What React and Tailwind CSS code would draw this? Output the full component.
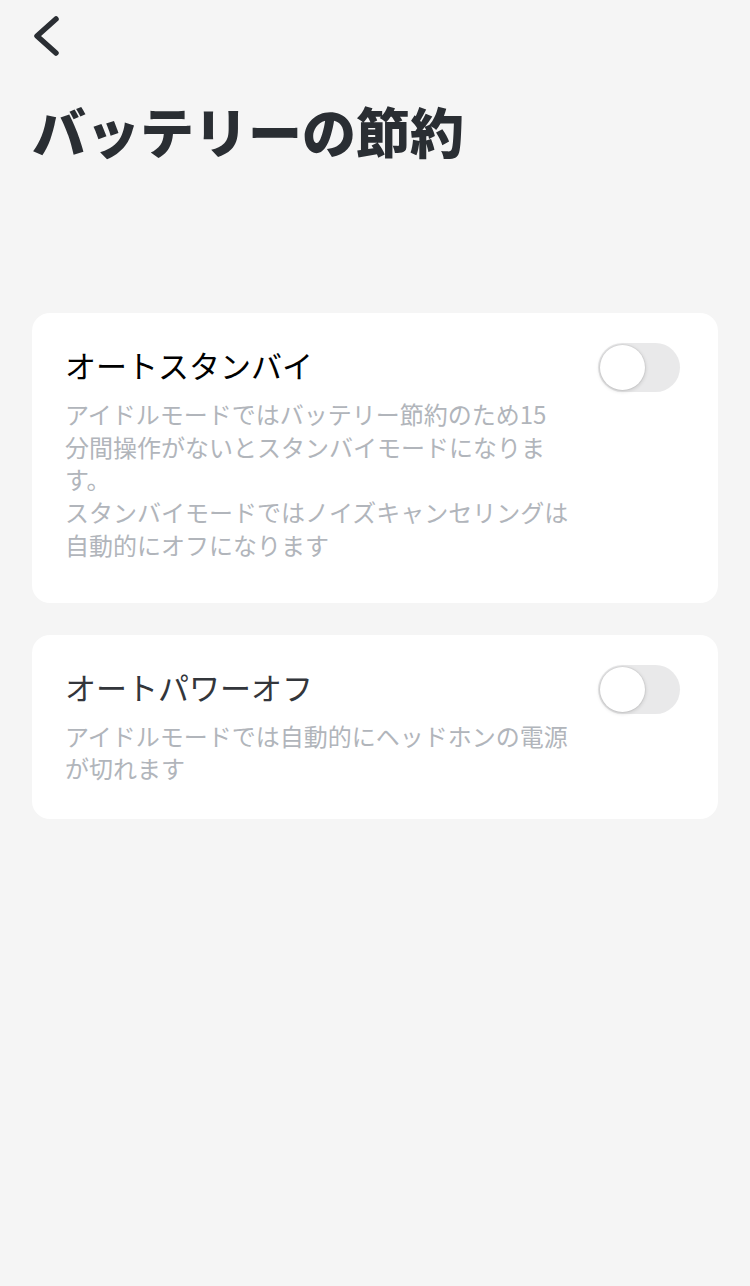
import { useState } from "react";

const Toggle = ({ on, onChange }) => {
  return (
    <button
      onClick={() => onChange(!on)}
      className={`relative shrink-0 w-[82px] h-[49px] rounded-full transition-colors ${
        on ? "bg-[#34c759]" : "bg-[#e9e9ea]"
      }`}
    >
      <span
        className={`absolute top-[2px] w-[45px] h-[45px] rounded-full bg-white shadow-[0_1px_4px_rgba(0,0,0,0.18),0_0_0_1px_rgba(0,0,0,0.04)] transition-all ${
          on ? "left-[35px]" : "left-[2px]"
        }`}
      />
    </button>
  );
};

const SettingCard = ({ title, titleColor, desc, on, onChange, pt, pb }) => {
  return (
    <div className={`bg-white rounded-[18px] pl-[33px] pr-[38px] flex justify-between ${pt} ${pb}`}>
      <div className="w-[505px]">
        <p className={`text-[31px] leading-[44px] ${titleColor}`}>{title}</p>
        <p className="mt-[11px] text-[24px] leading-[32.7px] text-[#b1b5bb] whitespace-pre-line">
          {desc}
        </p>
      </div>
      <Toggle on={on} onChange={onChange} />
    </div>
  );
};

const App = () => {
  const [standby, setStandby] = useState(false);
  const [powerOff, setPowerOff] = useState(false);

  return (
    <div
      className="min-h-[1286px] bg-[#f5f5f5] px-[32px]"
      style={{ fontFamily: '"Noto Sans CJK JP", "Noto Sans", sans-serif' }}
    >
      <div className="pt-[15px]">
        <svg width="28" height="42" viewBox="0 0 28 42">
          <polyline
            points="24,4 5,21 24,38"
            fill="none"
            stroke="#2a2e33"
            strokeWidth="5.5"
            strokeLinecap="round"
            strokeLinejoin="round"
          />
        </svg>
      </div>
      <h1 className="mt-[36px] text-[54px] leading-[76px] font-black text-[#2a2e33]">
        バッテリーの節約
      </h1>

      <div className="mt-[144px] flex flex-col gap-[32px]">
        <SettingCard
          title="オートスタンバイ"
          titleColor="text-black"
          desc={"アイドルモードではバッテリー節約のため15分間操作がないとスタンバイモードになります。\nスタンバイモードではノイズキャンセリングは自動的にオフになります"}
          on={standby}
          onChange={setStandby}
          pt="pt-[30px]"
          pb="pb-[41px]"
        />
        <SettingCard
          title="オートパワーオフ"
          titleColor="text-[#33363b]"
          desc="アイドルモードでは自動的にヘッドホンの電源が切れます"
          on={powerOff}
          onChange={setPowerOff}
          pt="pt-[30px]"
          pb="pb-[34px]"
        />
      </div>
    </div>
  );
};

export default App;
